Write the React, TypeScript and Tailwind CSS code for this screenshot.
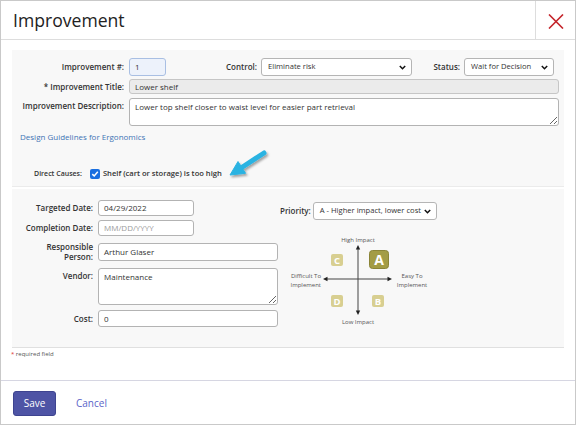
import React from "react";

function Chevron() {
  return (
    <svg width="7" height="5" viewBox="0 0 7 5" className="shrink-0">
      <path d="M0.8 0.9 L3.5 3.7 L6.2 0.9" fill="none" stroke="#111" strokeWidth="1.5" />
    </svg>
  );
}

function Select({ className, text }: { className: string; text: string }) {
  return (
    <div
      className={
        "h-[18px] flex items-center justify-between pl-[6px] pr-[5px] bg-white border border-[#b5b5b5] rounded-[3px] text-[7.6px] text-[#333] " +
        className
      }
    >
      <span className="whitespace-nowrap">{text}</span>
      <Chevron />
    </div>
  );
}

function Diagram() {
  const t = { fontFamily: "'Open Sans', sans-serif", fontSize: 6, fill: "#555" } as React.CSSProperties;
  return (
    <svg width="155" height="95" viewBox="0 0 155 95">
      <text x="77" y="8.5" textAnchor="middle" style={t}>High Impact</text>
      <text x="77" y="91" textAnchor="middle" style={t}>Low Impact</text>
      <text x="40" y="45" textAnchor="end" style={t}>Difficult To</text>
      <text x="40" y="54" textAnchor="end" style={t}>Implement</text>
      <text x="131" y="45" textAnchor="middle" style={t}>Easy To</text>
      <text x="131" y="54" textAnchor="middle" style={t}>Implement</text>
      <line x1="77" y1="15" x2="77" y2="79" stroke="#444" strokeWidth="1" />
      <line x1="45" y1="46" x2="108" y2="46" stroke="#444" strokeWidth="1" />
      <path d="M77 12 L74.8 16.5 L79.2 16.5 Z" fill="#222" />
      <path d="M77 82 L74.8 77.5 L79.2 77.5 Z" fill="#222" />
      <path d="M42 46 L46.5 43.8 L46.5 48.2 Z" fill="#222" />
      <path d="M111 46 L106.5 43.8 L106.5 48.2 Z" fill="#222" />
      <rect x="88.5" y="17.5" width="19" height="18" rx="3" fill="#a39c45" stroke="#8a8437" strokeWidth="1" />
      <text x="98" y="31.5" textAnchor="middle" style={{ fontFamily: "'Open Sans', sans-serif", fontSize: 14, fontWeight: 700, fill: "#fff" }}>A</text>
      <rect x="50" y="21" width="12" height="12" rx="2" fill="#d8cf91" />
      <text x="56" y="30.5" textAnchor="middle" style={{ fontFamily: "'Open Sans', sans-serif", fontSize: 9.5, fontWeight: 700, fill: "#fff" }}>C</text>
      <rect x="50" y="62" width="12" height="12" rx="2" fill="#d8cf91" />
      <text x="56" y="71.5" textAnchor="middle" style={{ fontFamily: "'Open Sans', sans-serif", fontSize: 9.5, fontWeight: 700, fill: "#fff" }}>D</text>
      <rect x="91" y="62" width="12" height="12" rx="2" fill="#d8cf91" />
      <text x="97" y="71.5" textAnchor="middle" style={{ fontFamily: "'Open Sans', sans-serif", fontSize: 9.5, fontWeight: 700, fill: "#fff" }}>B</text>
    </svg>
  );
}

function Arrow() {
  return (
    <svg width="50" height="36" viewBox="0 0 50 36" className="absolute left-[211px] top-[98px] overflow-visible">
      <defs>
        <filter id="sh" x="-30%" y="-30%" width="160%" height="160%">
          <feDropShadow dx="1.5" dy="2" stdDeviation="1.3" floodColor="#000" floodOpacity="0.35" />
        </filter>
      </defs>
      <g filter="url(#sh)">
        <line x1="41" y1="5" x2="18" y2="20" stroke="#2bb3e2" strokeWidth="5" strokeLinecap="round" />
        <path d="M7 27 L22.6 25.3 L15 13.5 Z" fill="#2bb3e2" stroke="#2bb3e2" strokeWidth="1" strokeLinejoin="round" />
      </g>
    </svg>
  );
}

export default function App() {
  const label = "font-semibold text-[8px] text-[#333] text-right leading-[10px]";
  const input = "bg-white border border-[#b3b3b3] rounded-[3px] text-[8px] text-[#333] flex items-center pl-[5px]";
  return (
    <div className="w-[576px] h-[425px] border border-[#c9c9c9] flex flex-col bg-white font-['Open_Sans',sans-serif] text-[#333]">
      {/* header */}
      <div className="h-[39px] border-b border-[#dddddd] flex shrink-0">
        <div className="flex-1 flex items-center pl-[12px] text-[17.6px] text-[#222]">Improvement</div>
        <div className="w-[40px] border-l border-[#dddddd] flex items-center justify-center pt-[2px]">
          <svg width="16" height="15" viewBox="0 0 16 15">
            <path d="M1 0.5 L15 14.5 M15 0.5 L1 14.5" stroke="#c4242b" strokeWidth="1.6" fill="none" />
          </svg>
        </div>
      </div>

      {/* body */}
      <div className="h-[340px] shrink-0 flex flex-col">
        <div className="mx-[11px] mt-[10px] flex flex-col">
          {/* top section */}
          <div className="relative bg-[#f8f8f8] border-b border-[#ebebeb] pt-[8px] pb-[6px]">
            <div className="flex items-center h-[18px]">
              <div className={"w-[112px] " + label}>Improvement #:</div>
              <div className="ml-[5px] w-[37px] h-[18px] border border-[#a9bfe3] bg-[#edf2fb] rounded-[3px] flex items-center pl-[5px] text-[8px]">1</div>
              <div className={"w-[91px] " + label}>Control:</div>
              <Select className="ml-[4px] w-[151px]" text="Eliminate risk" />
              <div className={"w-[48px] " + label}>Status:</div>
              <Select className="ml-[4px] w-[90px]" text="Wait for Decision" />
            </div>
            <div className="flex items-center mt-[3px]">
              <div className={"w-[112px] " + label}>* Improvement Title:</div>
              <div className="ml-[5px] w-[430px] h-[15px] bg-[#ebebeb] border border-[#c6c6c6] rounded-[3px] text-[8px] flex items-center pl-[5px]">Lower shelf</div>
            </div>
            <div className="flex items-start mt-[4px]">
              <div className={"w-[112px] pt-[3px] " + label}>Improvement Description:</div>
              <textarea
                className="ml-[5px] w-[430px] h-[28px] bg-white border border-[#b3b3b3] rounded-[3px] text-[8px] leading-[10px] text-[#333] px-[5px] py-[3px] outline-none font-['Open_Sans',sans-serif]"
                defaultValue="Lower top shelf closer to waist level for easier part retrieval"
              />
            </div>
            <div className="mt-[5px] pl-[8px] h-[11px] leading-[11px] text-[8px] text-[#3f74b5]">Design Guidelines for Ergonomics</div>
            <div className="mt-[26px] pl-[22px] flex items-center h-[12px]">
              <div className="font-semibold text-[7px] text-[#333]">Direct Causes:</div>
              <div className="ml-[8px] w-[10px] h-[10px] rounded-[2px] bg-[#1a6fe0] flex items-center justify-center">
                <svg width="8" height="8" viewBox="0 0 8 8">
                  <path d="M1.3 4.1 L3.2 6 L6.8 1.8" stroke="#fff" strokeWidth="1.5" fill="none" />
                </svg>
              </div>
              <div className="ml-[3px] text-[7.6px] font-semibold text-[#333]">Shelf (cart or storage) is too high</div>
            </div>
            <Arrow />
          </div>

          {/* bottom section */}
          <div className="mt-[2px] bg-[#f8f8f8] border-b border-[#e0e0e0] pt-[11px] pb-[19px] flex">
            <div className="flex flex-col">
              <div className="flex items-center">
                <div className={"w-[81px] " + label}>Targeted Date:</div>
                <div className={"ml-[5px] w-[96px] h-[16px] " + input}>04/29/2022</div>
              </div>
              <div className="flex items-center mt-[4px]">
                <div className={"w-[81px] " + label}>Completion Date:</div>
                <div className={"ml-[5px] w-[96px] h-[16px] " + input}>
                  <span className="text-[#9a9a9a]">MM/DD/YYYY</span>
                </div>
              </div>
              <div className="flex items-center mt-[6px]">
                <div className={"w-[81px] " + label + " leading-[8.5px]"}>Responsible<br />Person:</div>
                <div className={"ml-[5px] w-[180px] h-[18px] " + input}>Arthur Glaser</div>
              </div>
              <div className="flex items-start mt-[6px]">
                <div className={"w-[81px] pt-[3px] " + label}>Vendor:</div>
                <textarea
                  className="ml-[5px] w-[180px] h-[37px] bg-white border border-[#b3b3b3] rounded-[3px] text-[8px] leading-[10px] text-[#333] px-[5px] py-[3px] outline-none font-['Open_Sans',sans-serif]"
                  defaultValue="Maintenance"
                />
              </div>
              <div className="flex items-center mt-[5px]">
                <div className={"w-[81px] " + label}>Cost:</div>
                <div className={"ml-[5px] w-[180px] h-[17px] " + input}>0</div>
              </div>
            </div>
            <div className="ml-[2px] flex flex-col">
              <div className="flex items-center mt-[2px]">
                <div className="font-semibold text-[8px] text-[#333]">Priority:</div>
                <Select className="ml-[2px] w-[124px]" text="A - Higher impact, lower cost" />
              </div>
              <div className="mt-[13px] ml-[1px]">
                <Diagram />
              </div>
            </div>
          </div>
        </div>
        <div className="mt-[2px] pl-[10px] text-[6px] leading-[8px] text-[#555]">
          <span className="text-[#e0302e]">*</span> required field
        </div>
      </div>

      {/* footer */}
      <div className="flex-1 border-t border-[#d6d6e2] pt-[10px] pl-[12px] flex items-start">
        <div className="w-[43px] h-[25px] bg-[#4e54a5] border border-[#3e4490] rounded-[3px] text-white text-[10px] flex items-center justify-center">Save</div>
        <div className="ml-[20px] h-[25px] flex items-center text-[10px] text-[#5a63c8]">Cancel</div>
      </div>
    </div>
  );
}
